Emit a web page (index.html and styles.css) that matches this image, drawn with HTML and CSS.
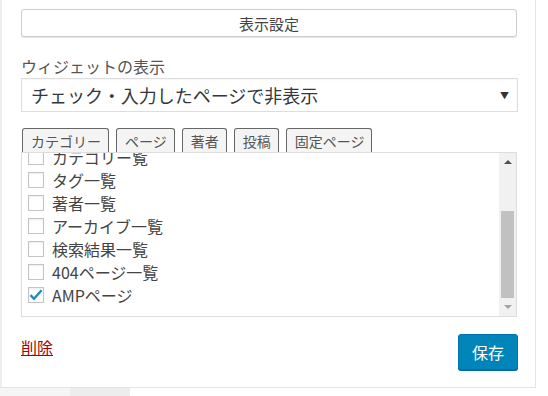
FILE: index.html
```html
<!DOCTYPE html>
<html lang="ja">
<head>
<meta charset="UTF-8">
<title>ウィジェット設定</title>
<link rel="stylesheet" href="styles.css">
</head>
<body>
	<div class="panel">
		<button class="toggleBtn" type="button">表示設定</button>
		<div class="field">
			<label class="fieldLabel">ウィジェットの表示</label>
			<div class="selectBox">
				<span>チェック・入力したページで非表示</span>
				<span class="selectArrow">▼</span>
			</div>
		</div>
		<ul class="tabs">
			<li>カテゴリー</li>
			<li>ページ</li>
			<li>著者</li>
			<li>投稿</li>
			<li>固定ページ</li>
		</ul>
		<div class="listBox">
			<ul class="checkList">
				<li><span class="chk"></span>カテゴリー覧</li>
				<li><span class="chk"></span>タグ一覧</li>
				<li><span class="chk"></span>著者一覧</li>
				<li><span class="chk"></span>アーカイブ一覧</li>
				<li><span class="chk"></span>検索結果一覧</li>
				<li><span class="chk"></span>404ページ一覧</li>
				<li><span class="chk checked"><svg width="14" height="14" viewBox="0 0 14 14"><path d="M1.5 7.2 L5 10.8 L12.6 2.2" fill="none" stroke="#1e8cbe" stroke-width="2.4"/></svg></span>AMPページ</li>
			</ul>
			<div class="scrollbar">
				<span class="arrowUp"></span>
				<div class="track"><div class="thumb"></div></div>
				<span class="arrowDown"></span>
			</div>
		</div>
		<div class="actions">
			<a class="deleteLink" href="#">削除</a>
			<button class="saveBtn" type="button">保存</button>
		</div>
	</div>
	<div class="under">
		<span class="underLeft"></span>
		<span class="underTab"></span>
	</div>
</body>
</html>
```

FILE: styles.css
```css
*{padding:0;margin:0;list-style:none;box-sizing:border-box;}
body{
	background:#fff;
	font-family:"Noto Sans CJK JP","Noto Sans",sans-serif;
	color:#32373c;
}
.panel{
	width:536px;
	height:388px;
	background:#fff;
	border-left:2px solid #eee;
	border-right:1px solid #e5e5e5;
	border-bottom:1px solid #e5e5e5;
	padding:9px 18px 0 19px;
}
.toggleBtn{
	display:block;
	width:496px;
	height:28px;
	border:1px solid #ccc;
	border-radius:3px;
	background:#fff;
	font-family:inherit;
	font-size:15px;
	color:#444;
	box-shadow:0 1px 0 #e6e6e6;
}
.field{
	margin-top:18px;
}
.fieldLabel{
	display:block;
	font-size:16px;
	line-height:23px;
	color:#555;
}
.selectBox{
	width:497px;
	height:34px;
	border:1px solid #ddd;
	display:flex;
	justify-content:space-between;
	align-items:center;
	padding:0 8px 0 9px;
	font-size:18px;
	color:#32373c;
	box-shadow:inset 0 1px 2px rgba(0,0,0,.04);
}
.selectArrow{
	font-size:9px;
	color:#333;
}
.tabs{
	display:flex;
	gap:7px;
	margin-top:16px;
	padding-left:1px;
	height:24px;
}
.tabs li{
	height:25px;
	padding:0 7px 0 8px;
	border:1px solid #666;
	border-bottom:none;
	border-radius:3px 3px 0 0;
	background:#f4f4f4;
	font-size:14px;
	line-height:24px;
	color:#555;
}
.listBox{
	position:relative;
	width:496px;
	height:165px;
	border:1px solid #ddd;
	background:#fff;
	display:flex;
	overflow:hidden;
}
.checkList{
	flex:1;
	margin-top:-8px;
	padding-left:6px;
}
.checkList li{
	height:23px;
	display:flex;
	align-items:center;
	font-size:16px;
	color:#444;
}
.chk{
	width:16px;
	height:16px;
	border:1px solid #c4c4c4;
	background:#fff;
	margin-right:8px;
	display:flex;
	align-items:center;
	justify-content:center;
	box-shadow:inset 0 1px 2px rgba(0,0,0,.07);
}
.scrollbar{
	width:17px;
	background:#f1f1f1;
	display:flex;
	flex-direction:column;
	align-items:center;
}
.arrowUp,.arrowDown{
	width:0;
	height:0;
	border-left:4px solid transparent;
	border-right:4px solid transparent;
	margin:7px 0;
}
.arrowUp{border-bottom:4px solid #505050;}
.arrowDown{border-top:4px solid #a3a3a3;}
.track{
	flex:1;
	width:100%;
	display:flex;
	flex-direction:column;
	justify-content:flex-end;
	padding:0 2px;
}
.thumb{
	height:87px;
	background:#c1c1c1;
}
.actions{
	display:flex;
	justify-content:space-between;
	align-items:flex-start;
	margin-top:17px;
	width:497px;
}
.deleteLink{
	margin-top:1px;
	font-size:16px;
	color:#a00;
	text-decoration:underline;
}
.saveBtn{
	width:60px;
	height:36px;
	border:1px solid #0073aa;
	border-radius:3px;
	background:#0085ba;
	color:#fff;
	font-family:inherit;
	font-size:16px;
	box-shadow:0 1px 0 #006799;
}
.under{
	display:flex;
	height:8px;
}
.underLeft{
	width:70px;
	background:#f5f5f5;
}
.underTab{
	width:60px;
	background:#ededed;
}
```
